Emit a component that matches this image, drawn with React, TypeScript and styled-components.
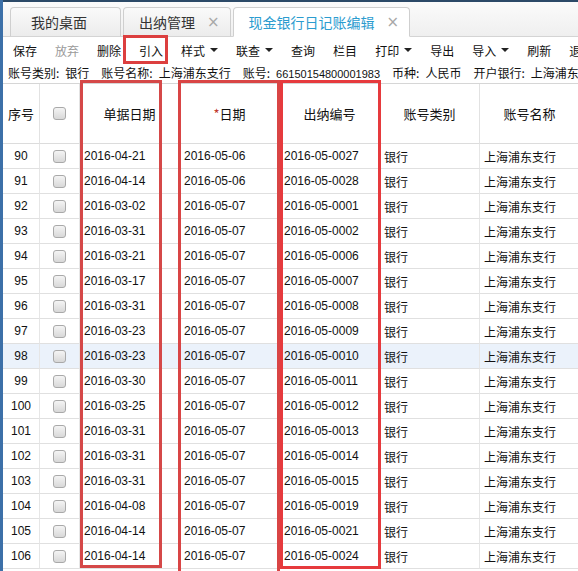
import styled, { createGlobalStyle } from "styled-components";

const GlobalStyle = createGlobalStyle`
  html, body {
    margin: 0;
    padding: 0;
    overflow: hidden;
    background: #fff;
  }
  body {
    font-family: "Noto Sans CJK SC", "Liberation Sans", sans-serif;
    color: #111;
  }
`;

const Page = styled.div`
  position: relative;
  width: 575px;
  height: 571px;
  border-left: 3px solid #3c70a8;
  display: flex;
  flex-direction: column;
  overflow: hidden;
`;

const TabBar = styled.div`
  box-sizing: border-box;
  height: 37px;
  flex: none;
  display: flex;
  align-items: flex-end;
  gap: 2px;
  padding-left: 7px;
  border-top: 2px solid #2c4a68;
  border-bottom: 1px solid #d4d4d4;
  background: linear-gradient(#fbfbfb, #efefef);
`;

const Tab = styled.div<{ $active?: boolean; $closable?: boolean }>`
  box-sizing: border-box;
  height: 30px;
  margin-bottom: -1px;
  display: flex;
  align-items: center;
  padding: 0 ${(p) => (p.$closable ? "10px" : "33px")} 0
    ${(p) => (p.$closable ? "15px" : "20px")};
  border: 1px solid #cfcfcf;
  border-bottom: ${(p) => (p.$active ? "1px solid #fff" : "1px solid #d4d4d4")};
  border-radius: 4px 4px 0 0;
  background: ${(p) => (p.$active ? "#fff" : "linear-gradient(#fafafa, #ececec)")};
  color: ${(p) => (p.$active ? "#2b9ccf" : "#333")};
  font-size: 14px;
  white-space: nowrap;
`;

const Close = styled.span`
  margin-left: 12px;
  color: #a8a8a8;
  font-size: 15px;
  font-family: "DejaVu Sans", sans-serif;
`;

const Toolbar = styled.div`
  height: 26px;
  flex: none;
  display: flex;
  align-items: center;
  padding-left: 1px;
  white-space: nowrap;
  font-size: 12px;
`;

const ToolButton = styled.div<{ $disabled?: boolean }>`
  display: flex;
  align-items: center;
  padding: 0 9px;
  flex: none;
  color: ${(p) => (p.$disabled ? "#9a9a9a" : "#111")};
`;

const Caret = styled.span`
  margin-left: 5px;
  width: 0;
  height: 0;
  border-left: 4px solid transparent;
  border-right: 4px solid transparent;
  border-top: 4px solid #222;
`;

const InfoBar = styled.div`
  height: 19px;
  flex: none;
  display: flex;
  align-items: center;
  padding-left: 5px;
  font-size: 12px;
  white-space: nowrap;
`;

const InfoItem = styled.span`
  display: flex;
  align-items: center;
  margin-right: 12px;
`;

const InfoValue = styled.span`
  margin-left: 6px;
`;

const Digits = styled.span`
  font-family: "Liberation Sans", sans-serif;
  font-size: 11px;
`;

const Grid = styled.div`
  flex: none;
  display: grid;
  grid-template-columns: 37px 40px 100px 100px 100px 100px 100px;
  border-top: 1px solid #d6d6d6;
  margin-top: 1px;
  font-size: 12px;
`;

const HeadCell = styled.div`
  box-sizing: border-box;
  height: 60px;
  display: flex;
  align-items: center;
  justify-content: center;
  border-bottom: 1px solid #dcdcdc;
  border-right: 1px solid #e2e2e2;
  background: #fff;
  font-size: 13px;
`;

const Star = styled.span`
  color: #c0392b;
`;

const Cell = styled.div<{ $center?: boolean; $hl?: boolean }>`
  box-sizing: border-box;
  height: 25px;
  display: flex;
  align-items: center;
  justify-content: ${(p) => (p.$center ? "center" : "flex-start")};
  padding-left: ${(p) => (p.$center ? "0" : "4px")};
  border-bottom: 1px solid #e0e0e0;
  border-right: 1px solid #e6e6e6;
  background: ${(p) => (p.$hl ? "#ebf2fb" : "#fff")};
  white-space: nowrap;
`;

const Num = styled.span`
  font-family: "Liberation Sans", sans-serif;
  font-size: 12px;
`;

const Check = styled.span`
  box-sizing: border-box;
  width: 13px;
  height: 13px;
  border: 1px solid #a9a9a9;
  border-radius: 3px;
  background: linear-gradient(#f4f4f4, #d8d8d8);
`;

const Marker = styled.div<{ $color: string }>`
  position: absolute;
  box-sizing: border-box;
  border: 3px solid ${(p) => p.$color};
  pointer-events: none;
`;

const rows: [number, string, string, string][] = [
  [90, "2016-04-21", "2016-05-06", "2016-05-0027"],
  [91, "2016-04-14", "2016-05-06", "2016-05-0028"],
  [92, "2016-03-02", "2016-05-07", "2016-05-0001"],
  [93, "2016-03-31", "2016-05-07", "2016-05-0002"],
  [94, "2016-03-21", "2016-05-07", "2016-05-0006"],
  [95, "2016-03-17", "2016-05-07", "2016-05-0007"],
  [96, "2016-03-31", "2016-05-07", "2016-05-0008"],
  [97, "2016-03-23", "2016-05-07", "2016-05-0009"],
  [98, "2016-03-23", "2016-05-07", "2016-05-0010"],
  [99, "2016-03-30", "2016-05-07", "2016-05-0011"],
  [100, "2016-03-25", "2016-05-07", "2016-05-0012"],
  [101, "2016-03-31", "2016-05-07", "2016-05-0013"],
  [102, "2016-03-31", "2016-05-07", "2016-05-0014"],
  [103, "2016-03-31", "2016-05-07", "2016-05-0015"],
  [104, "2016-04-08", "2016-05-07", "2016-05-0019"],
  [105, "2016-04-14", "2016-05-07", "2016-05-0021"],
  [106, "2016-04-14", "2016-05-07", "2016-05-0024"],
];

const tools: { label: string; menu?: boolean; disabled?: boolean }[] = [
  { label: "保存" },
  { label: "放弃", disabled: true },
  { label: "删除" },
  { label: "引入" },
  { label: "样式", menu: true },
  { label: "联查", menu: true },
  { label: "查询" },
  { label: "栏目" },
  { label: "打印", menu: true },
  { label: "导出" },
  { label: "导入", menu: true },
  { label: "刷新" },
  { label: "退出" },
];

export default function App() {
  return (
    <>
      <GlobalStyle />
      <Page>
        <TabBar>
          <Tab>我的桌面</Tab>
          <Tab $closable>
            出纳管理<Close>×</Close>
          </Tab>
          <Tab $active $closable>
            现金银行日记账编辑<Close>×</Close>
          </Tab>
        </TabBar>

        <Toolbar>
          {tools.map((t) => (
            <ToolButton key={t.label} $disabled={t.disabled}>
              {t.label}
              {t.menu && <Caret />}
            </ToolButton>
          ))}
        </Toolbar>

        <InfoBar>
          <InfoItem>
            账号类别:<InfoValue>银行</InfoValue>
          </InfoItem>
          <InfoItem>
            账号名称:<InfoValue>上海浦东支行</InfoValue>
          </InfoItem>
          <InfoItem>
            账号:
            <InfoValue>
              <Digits>66150154800001983</Digits>
            </InfoValue>
          </InfoItem>
          <InfoItem>
            币种:<InfoValue>人民币</InfoValue>
          </InfoItem>
          <InfoItem>
            开户银行:<InfoValue>上海浦东支行</InfoValue>
          </InfoItem>
        </InfoBar>

        <Grid>
          <HeadCell>序号</HeadCell>
          <HeadCell>
            <Check />
          </HeadCell>
          <HeadCell>单据日期</HeadCell>
          <HeadCell>
            <Star>*</Star>日期
          </HeadCell>
          <HeadCell>出纳编号</HeadCell>
          <HeadCell>账号类别</HeadCell>
          <HeadCell>账号名称</HeadCell>

          {rows.map(([no, billDate, date, code]) => {
            const hl = no === 98;
            return [
              <Cell key={`${no}-n`} $center $hl={hl}>
                <Num>{no}</Num>
              </Cell>,
              <Cell key={`${no}-c`} $center $hl={hl}>
                <Check />
              </Cell>,
              <Cell key={`${no}-b`} $hl={hl}>
                <Num>{billDate}</Num>
              </Cell>,
              <Cell key={`${no}-d`} $hl={hl}>
                <Num>{date}</Num>
              </Cell>,
              <Cell key={`${no}-k`} $hl={hl}>
                <Num>{code}</Num>
              </Cell>,
              <Cell key={`${no}-t`} $hl={hl}>
                银行
              </Cell>,
              <Cell key={`${no}-a`} $hl={hl}>
                上海浦东支行
              </Cell>,
            ];
          })}
        </Grid>

        <Marker $color="#dc3f3f" style={{ left: 120, top: 35, width: 45, height: 29 }} />
        <Marker $color="#d54848" style={{ left: 77, top: 80, width: 82, height: 488 }} />
        <Marker $color="#d94545" style={{ left: 175, top: 80, width: 102, height: 496 }} />
        <Marker $color="#e63a3d" style={{ left: 277, top: 80, width: 101, height: 489 }} />
      </Page>
    </>
  );
}
